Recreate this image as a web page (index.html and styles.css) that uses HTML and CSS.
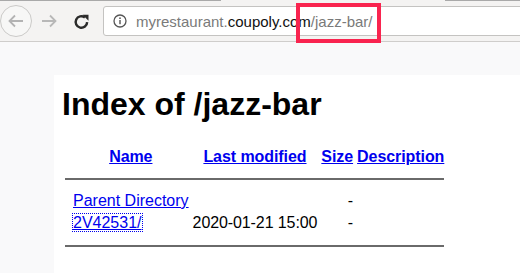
FILE: index.html
```html
<!DOCTYPE html>
<html lang="en">
<head>
    <meta charset="UTF-8">
    <title>Index of /jazz-bar</title>
    <link rel="stylesheet" href="styles.css">
</head>
<body>
    <div class="browser">
        <div class="tabline">
            <span class="tab-edge left"></span>
            <span class="tab-gap"></span>
            <span class="tab-edge right"></span>
        </div>
        <div class="navbar">
            <div class="back">
                <svg width="18" height="18" viewBox="0 0 18 18"><path d="M16 9H2.5M8 3.5L2.5 9L8 14.5" stroke="#b3b3b3" stroke-width="1.8" fill="none"/></svg>
            </div>
            <div class="forward">
                <svg width="18" height="18" viewBox="0 0 18 18"><path d="M2 9h13.5M10 3.5L15.5 9L10 14.5" stroke="#b8b8b8" stroke-width="1.8" fill="none"/></svg>
            </div>
            <div class="reload">
                <svg width="17" height="17" viewBox="0 0 16 16"><path d="M13.3 8.6A5.4 5.4 0 1 1 11.2 4.2" stroke="#2b2b2b" stroke-width="2.3" fill="none"/><path d="M9 1.6h5.6v5.6z" fill="#2b2b2b"/></svg>
            </div>
            <div class="urlbar">
                <svg class="info" width="14" height="14" viewBox="0 0 14 14"><circle cx="7" cy="7" r="6" stroke="#555" stroke-width="1.3" fill="none"/><rect x="6.3" y="6" width="1.4" height="4.2" fill="#555"/><circle cx="7" cy="4.2" r="0.85" fill="#555"/></svg>
                <span class="url"><span class="dim">myrestaurant.</span>coupoly.com<span class="dim">/jazz-bar/</span></span>
            </div>
        </div>
        <div class="highlight"></div>
    </div>

    <div class="page">
        <div class="sheet">
            <h1>Index of /jazz-bar</h1>
            <table>
                <tr>
                    <th class="icon"></th>
                    <th><a href="#">Name</a></th>
                    <th><a href="#">Last modified</a></th>
                    <th><a href="#">Size</a></th>
                    <th><a href="#">Description</a></th>
                </tr>
                <tr><th colspan="5"><hr></th></tr>
                <tr>
                    <td class="icon"></td>
                    <td><a href="#">Parent Directory</a></td>
                    <td>&nbsp;</td>
                    <td class="size">-</td>
                    <td>&nbsp;</td>
                </tr>
                <tr>
                    <td class="icon"></td>
                    <td><a href="#" class="focused">2V42531/</a></td>
                    <td class="date">2020-01-21 15:00</td>
                    <td class="size">-</td>
                    <td>&nbsp;</td>
                </tr>
                <tr><th colspan="5"><hr class="last"></th></tr>
            </table>
        </div>
    </div>
</body>
</html>
```
FILE: styles.css
```css
html, body {
    margin: 0;
    padding: 0;
    height: 100%;
    overflow: hidden;
}
body {
    display: flex;
    flex-direction: column;
    font-family: 'Liberation Sans', Arial, sans-serif;
    background: #f9f9fa;
}
.browser {
    position: relative;
    background: #f4f3f2;
    border-bottom: 1px solid #cfcdcb;
}
.tabline {
    display: flex;
    height: 1px;
}
.tab-edge {
    background: #a9a9a9;
}
.tab-edge.left {
    width: 221px;
}
.tab-gap {
    width: 224px;
}
.tab-edge.right {
    flex: 1;
}
.navbar {
    display: flex;
    align-items: center;
    height: 40px;
    overflow: hidden;
}
.back {
    display: flex;
    align-items: center;
    justify-content: center;
    width: 30px;
    height: 30px;
    border: 1px solid #cbcac8;
    border-radius: 50%;
    background: #f7f7f6;
}
.back svg, .forward svg, .reload svg {
    display: block;
}
.forward {
    margin-left: 8px;
}
.reload {
    margin-left: 15px;
}
.urlbar {
    display: flex;
    align-items: center;
    flex: 1;
    height: 28px;
    margin-left: 13px;
    margin-right: -10px;
    padding-left: 9px;
    background: #fff;
    border: 1px solid #c4c3c1;
    border-radius: 3px;
}
.info {
    display: block;
    margin-right: 9px;
}
.url {
    font-size: 15px;
    color: #111;
    white-space: nowrap;
}
.dim {
    color: #7a7a7a;
}
.highlight {
    position: absolute;
    left: 296px;
    top: 3px;
    width: 77px;
    height: 32px;
    border: 4px solid #f9244f;
}
.page {
    flex: 1;
    min-height: 0;
    padding: 33px 0 0 54px;
}
.sheet {
    background: #fff;
    height: 100%;
    box-sizing: border-box;
    padding: 11px 8px 0;
}
h1 {
    margin: 0 0 22px;
    font-size: 32px;
    font-weight: bold;
    color: #000;
}
table {
    font-size: 16px;
}
th, td {
    padding: 1px;
}
th.icon, td.icon {
    width: 4px;
}
th a {
    font-weight: bold;
    letter-spacing: -0.07px;
}
a {
    color: #0000ee;
}
.date {
    text-align: right;
    letter-spacing: -0.1px;
}
.size {
    text-align: right;
}
.focused {
    outline: 1px dotted #0000ee;
}
hr {
    margin: 8px 0;
    border: 0;
    border-top: 2px solid #6a6a6a;
}
hr.last {
    margin-top: 9px;
}
```
